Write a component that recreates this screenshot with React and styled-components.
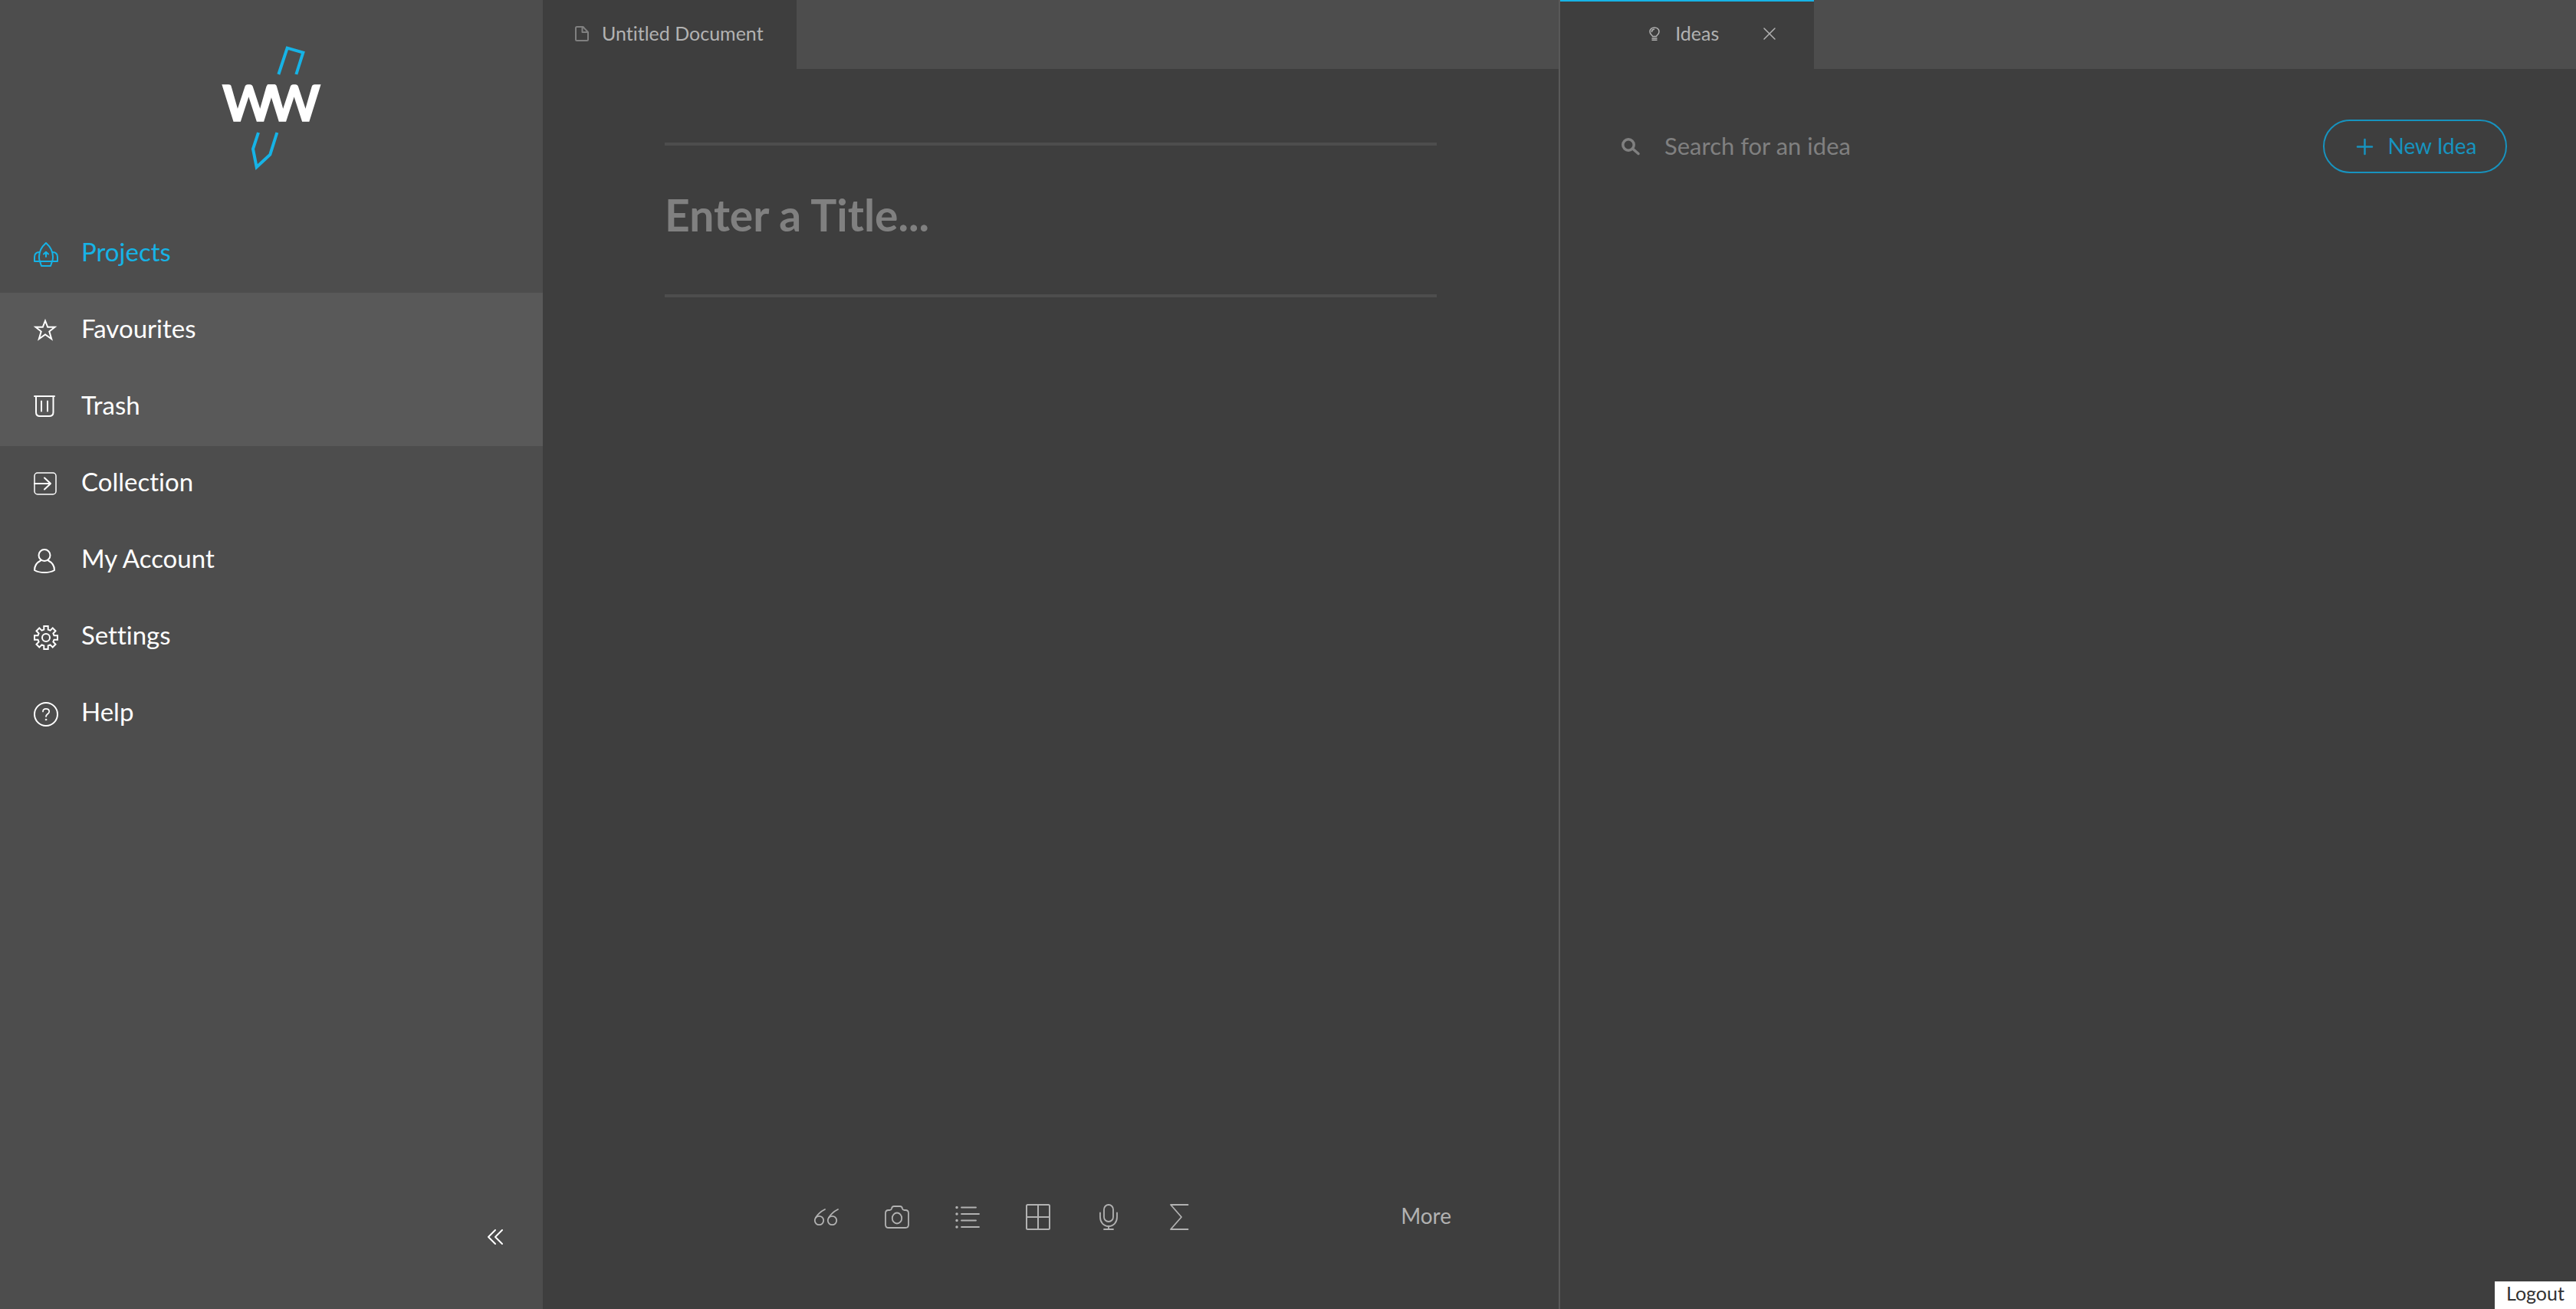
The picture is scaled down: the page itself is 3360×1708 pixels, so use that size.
import React, { useState } from "react";
import styled, { createGlobalStyle } from "styled-components";

const color = {
  panel: "#4d4d4d",
  panelHover: "#595959",
  page: "#3e3e3e",
  text: "#b2b2b2",
  muted: "#808080",
  accent: "#16b3e6",
  accentDim: "#1793bf",
};

const GlobalStyle = createGlobalStyle`
  *, *::before, *::after { box-sizing: border-box; }
  body { margin: 0; background: ${color.page}; }
  body, button, input { font-family: Lato, "Open Sans", sans-serif; font-variant-ligatures: none; }
  button { margin: 0; padding: 0; border: 0; background: none; color: inherit; cursor: pointer; }
  svg { display: block; flex: none; overflow: visible; }
`;

const Shell = styled.div`
  display: flex;
  min-height: 100vh;
  color: ${color.text};
`;

const Sidebar = styled.aside`
  display: flex;
  flex-direction: column;
  flex: 0 0 708px;
  background: ${color.panel};
  color: #fff;
`;

const LogoLink = styled.a`
  align-self: center;
  margin: 60px 0;
`;

const LogoMark = styled.svg`
  font-family: Lato, sans-serif;
  font-weight: 700;
  font-size: 196px;
`;

const Nav = styled.nav`
  flex: 1;
`;

const NavLink = styled.a`
  display: flex;
  align-items: flex-start;
  gap: 30px;
  height: 100px;
  padding: 30px 44px;
  font-size: 33px;
  line-height: 32px;
  text-decoration: none;
  color: ${(p) => (p.$active ? color.accent : "#fff")};
  background: ${(p) => (p.$raised ? color.panelHover : "transparent")};
`;

const NavIcon = styled.span`
  flex: 0 0 32px;
  padding-top: 4px;
`;

const CollapseButton = styled.button`
  align-self: flex-end;
  margin: 0 52px 84px 0;
`;

const Pane = styled.section`
  display: flex;
  flex-direction: column;
  flex: 1 1 0;
  min-width: 0;
  border-left: ${(p) => (p.$divided ? `2px solid ${color.panelHover}` : "0")};
`;

const TabBar = styled.div`
  display: flex;
  height: 90px;
  background: ${color.panel};
`;

const Tab = styled.div`
  display: flex;
  align-items: center;
  justify-content: ${(p) => (p.$closable ? "flex-end" : "flex-start")};
  flex: 0 0 25%;
  padding: 0 ${(p) => (p.$closable ? "50px" : "42px")} 6px;
  border-top: 2px solid ${(p) => (p.$closable ? color.accent : color.page)};
  background: ${color.page};
`;

const TabLabel = styled.button`
  display: flex;
  align-items: center;
  gap: ${(p) => p.$gap}px;
  font-size: 25px;
  line-height: 30px;
  white-space: nowrap;
`;

const CloseButton = styled.button`
  margin-left: 58px;
  padding-top: 2px;
`;

const TabIcon = styled.span`
  padding-top: 2px;
`;

const Editor = styled.div`
  flex: 1;
  padding: 96px 12% 0;
`;

const TitleInput = styled.input`
  display: block;
  width: 100%;
  height: 202px;
  padding: 0 0 14px;
  border: solid ${color.panel};
  border-width: 4px 0;
  outline: 0;
  background: none;
  color: ${color.text};
  font-size: 57px;
  font-weight: 700;
  &::placeholder { color: ${color.muted}; opacity: 1; }
`;

const Toolbar = styled.div`
  display: flex;
  justify-content: space-between;
  align-items: center;
  height: 138px;
  padding: 0 140px 102px 354px;
`;

const Tools = styled.div`
  display: flex;
  gap: 60px;
`;

const ToolButton = styled.button`
  display: grid;
  place-items: center;
  width: 32px;
  height: 36px;
`;

const MoreButton = styled.button`
  padding-bottom: 4px;
  font-size: 28px;
  line-height: 30px;
`;

const IdeasHeader = styled.div`
  display: flex;
  align-items: center;
  padding: 66px 90px 0 80px;
`;

const SearchLabel = styled.label`
  display: flex;
  align-items: center;
  gap: 32px;
  flex: 1;
  color: ${color.muted};
`;

const SearchInput = styled.input`
  flex: 1;
  height: 70px;
  padding: 0 0 2px;
  border: 0;
  outline: 0;
  background: none;
  color: ${color.text};
  font-size: 31px;
  &::placeholder { color: ${color.muted}; opacity: 1; }
`;

const NewIdeaButton = styled.button`
  display: flex;
  align-items: center;
  justify-content: center;
  gap: 20px;
  width: 240px;
  height: 70px;
  padding-left: 4px;
  border: 2px solid ${color.accentDim};
  border-radius: 35px;
  color: ${color.accentDim};
  font-size: 28px;
  line-height: 30px;
`;

const NewIdeaText = styled.span`
  padding-bottom: 2px;
`;

const LogoutButton = styled.button`
  position: fixed;
  right: 0;
  bottom: 0;
  width: 106px;
  height: 36px;
  padding-bottom: 6px;
  background: #fff;
  color: #333;
  font-size: 25px;
  line-height: 30px;
`;

const Line = ({ w, h, sw = 2, children }) => (
  <svg
    width={w}
    height={h}
    viewBox={`0 0 ${w} ${h}`}
    fill="none"
    stroke="currentColor"
    strokeWidth={sw}
    strokeLinejoin="round"
    strokeLinecap="round"
    aria-hidden="true"
  >
    {children}
  </svg>
);

const Logo = () => (
  <LogoMark width="128" height="162" viewBox="90 60 384 486" role="img" aria-label="WW">
    <g fill="none" stroke={color.accent} strokeWidth="12">
      <path d="M310 171 L344 68 L406 86 L379 171" />
      <path d="M231 399 L210 463 L224 534 L277 485 L304 399" />
    </g>
    <text x="90 268" y="355" fill="#fff" stroke="#fff" strokeWidth="5">WW</text>
  </LogoMark>
);

const Rocket = () => (
  <Line w={32} h={32}>
    <path d="M16 1 C20.500 5 25 12 25 19 C25 21.500 24.700 23.500 24.200 25 H7.800 C7.300 23.500 7 21.500 7 19 C7 12 11.500 5 16 1Z" />
    <path d="M7.500 13 C3.500 13 1 15.500 1 19.500 V25 H8 M24.500 13 C28.500 13 31 15.500 31 19.500 V25 H24" />
    <path d="M8 25 L10 31 H22 L24 25 M16 19 V13 M13 15.500 L16 12.700 L19 15.500" />
  </Line>
);

const Star = () => (
  <Line w={30} h={28}>
    <path strokeLinejoin="miter" d="M15 2.500 L18.200 10.800 H27.500 L20.300 16.500 L23.200 26.300 L15 20.500 L6.800 26.300 L9.700 16.500 L2.500 10.800 H11.800Z" />
  </Line>
);

const Trash = () => (
  <Line w={28} h={28}>
    <path d="M1 1 H27 M3 1 V22 Q3 27 8 27 H20 Q25.500 27 25.500 22 V1 M10 7.500 V20.500 M18 7.500 V20.500" />
  </Line>
);

const Collection = () => (
  <Line w={30} h={30}>
    <rect x="1" y="1" width="28" height="28" rx="4" strokeWidth="1.500" />
    <path d="M1 15 H22 M14 7.500 L22 15 L14 22.500" />
  </Line>
);

const Account = () => (
  <Line w={28} h={32}>
    <circle cx="14" cy="8.500" r="7.500" />
    <path d="M9 15.500 C4 18 1 22 1 28 Q6 31 14 31 Q22 31 27 28 C27 22 24 18 19 15.500" />
  </Line>
);

const Gear = () => (
  <Line w={32} h={32}>
    <path
      strokeLinejoin="miter"
      d="M13.300 1 H18.700 V5.500 L21.500 6.600 L24.700 3.500 L28.500 7.300 L25.400 10.500 L26.500 13.300 H31 V18.700 H26.500 L25.400 21.500 L28.500 24.700 L24.700 28.500 L21.500 25.400 L18.700 26.500 V31 H13.300 V26.500 L10.500 25.400 L7.300 28.500 L3.500 24.700 L6.600 21.500 L5.500 18.700 H1 V13.300 H5.500 L6.600 10.500 L3.500 7.300 L7.300 3.500 L10.500 6.600 L13.300 5.500Z"
    />
    <circle cx="16" cy="16" r="5" />
  </Line>
);

const Help = () => (
  <Line w={32} h={32}>
    <circle cx="16" cy="16" r="15" />
    <path strokeWidth="1.700" d="M12 12.500 C12 10 13.500 8.800 16 8.800 C18.500 8.800 20.200 10.300 20.200 12.400 C20.200 15.500 16 15.500 16 19" />
    <circle cx="16" cy="23" r="1" fill="currentColor" strokeWidth="0.500" />
  </Line>
);

const DoubleChevron = () => (
  <Line w={20} h={20}>
    <path d="M10 1 L1 10 L10 19 M19 1 L10 10 L19 19" />
  </Line>
);

const Doc = () => (
  <Line w={18} h={20}>
    <path stroke={color.muted} d="M10.500 1 H2.500 Q1 1 1 2.500 V17.500 Q1 19 2.500 19 H15.500 Q17 19 17 17.500 V8 L10.500 1 Q9.500 1 9.500 2 V8 H17" />
  </Line>
);

const Bulb = () => (
  <Line w={14} h={18} sw={1.5}>
    <path d="M4.500 12.500 C4.500 11 1 10 1 6.500 C1 3 3.700 1 7 1 C10.300 1 13 3 13 6.500 C13 10 9.500 11 9.500 12.500Z M3.500 6.500 Q3.500 3.500 6.500 3.300" />
    <path strokeLinecap="butt" d="M3.500 15 H10.500 M3.500 17.300 H10.500" />
  </Line>
);

const Close = () => (
  <Line w={16} h={16} sw={1.5}>
    <path d="M1 1 L15 15 M15 1 L1 15" />
  </Line>
);

const Search = () => (
  <Line w={24} h={22} sw={3.5}>
    <circle cx="9" cy="9" r="7.200" />
    <path d="M14.500 14 L22 20.500" />
  </Line>
);

const Plus = () => (
  <Line w={21} h={21} sw={2.5}>
    <path d="M10.500 1 V20 M1 10.500 H20" />
  </Line>
);

const Quote = () => (
  <Line w={32} h={22} sw={1.8}>
    <circle cx="6.500" cy="15.500" r="5.700" />
    <circle cx="23.500" cy="15.500" r="5.700" />
    <path d="M1.800 12 Q6 5 14 1 M18.800 12 Q23 5 31 1" />
  </Line>
);

const Camera = () => (
  <Line w={32} h={30} sw={1.8}>
    <path d="M5 6 H6.500 Q8.500 6 9 4 Q9.500 1 12 1 H20 Q22.500 1 23 4 Q23.500 6 25.500 6 H27 Q31 6 31 10 V25 Q31 29 27 29 H5 Q1 29 1 25 V10 Q1 6 5 6Z" />
    <ellipse cx="16" cy="16.500" rx="6.200" ry="7" />
  </Line>
);

const List = () => (
  <Line w={32} h={30}>
    <path strokeWidth="1.800" d="M8 2.500 H27 M8 11 H31 M8 19.500 H27 M8 28 H31" />
    <path strokeWidth="3.500" d="M2 2.500 V2.600 M2 11 V11.100 M2 19.500 V19.600 M2 28 V28.100" />
  </Line>
);

const Grid = () => (
  <Line w={32} h={34}>
    <rect x="1" y="1" width="30" height="32" rx="1.500" />
    <path d="M16 1 V33 M1 17 H31" />
  </Line>
);

const Mic = () => (
  <Line w={24} h={34} sw={1.8}>
    <rect x="6" y="1" width="12" height="22" rx="6" />
    <path d="M1 11.500 V17 C1 24 5.500 29 12 29 C18.500 29 23 24 23 17 V11.500 M12 29 V33 M6 33 H18" />
  </Line>
);

const Sigma = () => (
  <Line w={24} h={34} sw={1.8}>
    <path d="M23.500 1 H1 L15 17 L1 33 H23.500" />
  </Line>
);

const navItems = [
  { label: "Projects", Icon: Rocket, active: true },
  { label: "Favourites", Icon: Star, raised: true },
  { label: "Trash", Icon: Trash, raised: true },
  { label: "Collection", Icon: Collection },
  { label: "My Account", Icon: Account },
  { label: "Settings", Icon: Gear },
  { label: "Help", Icon: Help },
];

const tools = [
  ["Quote", Quote],
  ["Photo", Camera],
  ["List", List],
  ["Table", Grid],
  ["Dictate", Mic],
  ["Formula", Sigma],
];

export default function App() {
  const [title, setTitle] = useState("");
  const [query, setQuery] = useState("");

  return (
    <>
      <GlobalStyle />
      <Shell>
        <Sidebar>
          <LogoLink href="#home">
            <Logo />
          </LogoLink>
          <Nav>
            {navItems.map(({ label, Icon, active, raised }) => (
              <NavLink key={label} href={`#${label}`} $active={active} $raised={raised}>
                <NavIcon>
                  <Icon />
                </NavIcon>
                {label}
              </NavLink>
            ))}
          </Nav>
          <CollapseButton type="button" aria-label="Collapse sidebar">
            <DoubleChevron />
          </CollapseButton>
        </Sidebar>

        <Pane>
          <TabBar>
            <Tab>
              <TabLabel type="button" $gap={17}>
                <TabIcon>
                  <Doc />
                </TabIcon>
                Untitled Document
              </TabLabel>
            </Tab>
          </TabBar>
          <Editor>
            <TitleInput
              aria-label="Title"
              placeholder="Enter a Title..."
              value={title}
              onChange={(e) => setTitle(e.target.value)}
            />
          </Editor>
          <Toolbar>
            <Tools>
              {tools.map(([name, Icon]) => (
                <ToolButton key={name} type="button" aria-label={name}>
                  <Icon />
                </ToolButton>
              ))}
            </Tools>
            <MoreButton type="button">More</MoreButton>
          </Toolbar>
        </Pane>

        <Pane $divided>
          <TabBar>
            <Tab $closable>
              <TabLabel type="button" $gap={20}>
                <TabIcon>
                  <Bulb />
                </TabIcon>
                Ideas
              </TabLabel>
              <CloseButton type="button" aria-label="Close Ideas">
                <Close />
              </CloseButton>
            </Tab>
          </TabBar>
          <IdeasHeader>
            <SearchLabel>
              <Search />
              <SearchInput
                type="text"
                aria-label="Search for an idea"
                placeholder="Search for an idea"
                value={query}
                onChange={(e) => setQuery(e.target.value)}
              />
            </SearchLabel>
            <NewIdeaButton type="button">
              <Plus />
              <NewIdeaText>New Idea</NewIdeaText>
            </NewIdeaButton>
          </IdeasHeader>
        </Pane>
      </Shell>
      <LogoutButton type="button">Logout</LogoutButton>
    </>
  );
}
